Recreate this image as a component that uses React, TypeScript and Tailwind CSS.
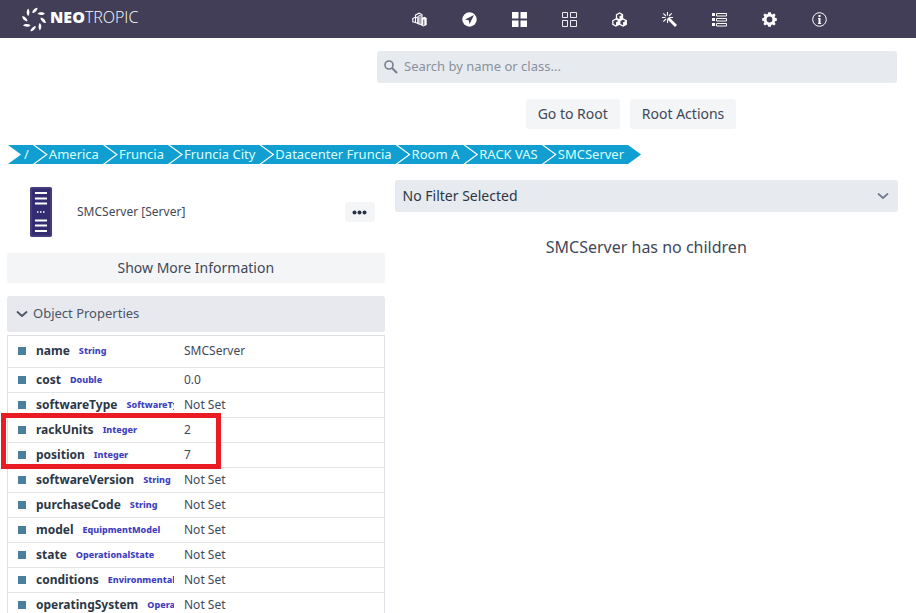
import type { ReactNode } from "react";

const petalAngles = [5, 50, 95, 140, 185, 230, 275, 320];

function LogoMark() {
  return (
    <svg width="24" height="25" viewBox="-12 -12.5 24 25" fill="#fff" aria-hidden="true">
      {petalAngles.map((angle) => (
        <path
          key={angle}
          transform={`rotate(${angle}) translate(0 -9.300) rotate(42)`}
          d="M0 -3.800C1.700 -2 1.900 1.500 .4 3.700C-1.700 2.200 -1.900 -1.500 0 -3.800Z"
        />
      ))}
    </svg>
  );
}

function Icon({ children }: { children: ReactNode }) {
  return (
    <svg width="15" height="15" viewBox="0 0 15 15" fill="none" stroke="#fff" aria-hidden="true">
      {children}
    </svg>
  );
}

const menuItems: { label: string; icon: ReactNode }[] = [
  {
    label: "Navigation",
    icon: (
      <Icon>
        <path d="M.8 6.500 3.500 5 6 6V11.500L3.500 10.500.8 9.800ZM3.500 5V10.500M3.500 5V3L7 1.200 10 2.500V4" strokeWidth="1.100" />
        <path d="M6 4.500 8 3.500 10 4.500V13L6 11.500ZM8 5V12" strokeWidth="1.100" />
        <path d="M9.500 6 12.500 4.800 14.700 6V13L11.500 14.500 9.500 13.500Z" fill="#fff" stroke="none" />
        <path d="M11.800 7.500V13.500" stroke="#423e58" strokeWidth=".9" />
      </Icon>
    ),
  },
  {
    label: "Location",
    icon: (
      <Icon>
        <circle cx="7.500" cy="7.500" r="7.200" fill="#fff" stroke="none" />
        <path d="M12 3 3 7.500 6.700 8.300 7.500 12Z" fill="#423e58" stroke="none" />
      </Icon>
    ),
  },
  {
    label: "Dashboard",
    icon: (
      <Icon>
        <path d="M0 0H6.500V6.500H0ZM8.500 0H15V6.500H8.500ZM0 8.500H6.500V15H0ZM8.500 8.500H15V15H8.500Z" fill="#fff" stroke="none" />
      </Icon>
    ),
  },
  {
    label: "Layout",
    icon: (
      <Icon>
        <path d="M.5 .5H5.500V5.500H.5ZM8.500 .5H14.500V5.500H8.500ZM.5 8.500H5.500V14.500H.5ZM8.500 8.500H14.500V14.500H8.500Z" strokeWidth=".9" />
      </Icon>
    ),
  },
  {
    label: "Packages",
    icon: (
      <Icon>
        <path d="M4.500 2.700 7.500 1 10.500 2.700V6.300L7.500 8 4.500 6.300Z" strokeWidth="1.300" />
        <path d="M7.500 4.200 10.500 2.700V6.300L7.500 8Z" fill="#fff" stroke="none" />
        <path d="M.8 8.700 3.900 7 7.200 8.700V12.300L3.900 14 .8 12.300ZM7.800 8.700 11.100 7 14.300 8.700V12.300L11.100 14 7.800 12.300Z" strokeWidth="1.300" />
        <path d="M4 10.200 7.200 8.700V12.300L4 14ZM11.100 10.200 14.300 8.700V12.300L11.100 14Z" fill="#fff" stroke="none" />
      </Icon>
    ),
  },
  {
    label: "Tools",
    icon: (
      <Icon>
        <path d="M6 6 14 14" strokeWidth="2.800" />
        <path d="M5.500 0V3.500M5.500 7.500V11M0 5.500H3.500M7.500 5.500H11M1.300 1.300 4 4M9.700 1.300 7 4M1.300 9.700 4 7" strokeWidth="1.100" />
      </Icon>
    ),
  },
  {
    label: "Lists",
    icon: (
      <Icon>
        <path d="M0 1H3V4H0ZM0 6H3V9H0ZM0 11H3V14H0Z" fill="#fff" stroke="none" />
        <path d="M4.500 1.500H14.500V4H4.500ZM4.500 6.500H14.500V9H4.500ZM4.500 11.500H14.500V14H4.500Z" />
      </Icon>
    ),
  },
  {
    label: "Settings",
    icon: (
      <Icon>
        <path
          fill="#fff"
          stroke="none"
          fillRule="evenodd"
          d="M6.200.3H8.800L9.300 2 10.400 2.500 12.100 1.500 13.600 3 12.600 4.700 13.100 5.800 14.800 6.300V8.700L13.100 9.200 12.600 10.300 13.600 12 12.100 13.500 10.400 12.500 9.300 13 8.800 14.700H6.200L5.700 13 4.600 12.500 2.900 13.500 1.400 12 2.400 10.300 1.900 9.200 .2 8.700V6.300L1.900 5.800 2.400 4.700 1.400 3 2.900 1.500 4.600 2.500 5.700 2ZM7.500 4.600A2.900 2.900 0 1 0 7.500 10.400A2.900 2.900 0 1 0 7.500 4.600Z"
        />
      </Icon>
    ),
  },
  {
    label: "About",
    icon: (
      <Icon>
        <circle cx="7.500" cy="7.500" r="6.800" />
        <path d="M6.500 3H8.500V5H6.500ZM6 6H8.500V11H9.200V12H6V11H6.500V7H6Z" fill="#fff" stroke="none" />
      </Icon>
    ),
  },
];

const crumbs = ["/", "America", "Fruncia", "Fruncia City", "Datacenter Fruncia", "Room A", "RACK VAS", "SMCServer"];

const properties = [
  { name: "name", type: "String", value: "SMCServer" },
  { name: "cost", type: "Double", value: "0.0" },
  { name: "softwareType", type: "SoftwareType", value: "Not Set" },
  { name: "rackUnits", type: "Integer", value: "2" },
  { name: "position", type: "Integer", value: "7" },
  { name: "softwareVersion", type: "String", value: "Not Set" },
  { name: "purchaseCode", type: "String", value: "Not Set" },
  { name: "model", type: "EquipmentModel", value: "Not Set" },
  { name: "state", type: "OperationalState", value: "Not Set" },
  { name: "conditions", type: "EnvironmentalConditions", value: "Not Set" },
  { name: "operatingSystem", type: "OperatingSystem", value: "Not Set" },
];

function Chevron({ color }: { color: string }) {
  return (
    <svg width="12" height="8" viewBox="0 0 12 8" fill="none" stroke={color} strokeWidth="1.800" aria-hidden="true">
      <path d="M1.500 2 6 6 10.500 2" strokeLinecap="round" strokeLinejoin="round" />
    </svg>
  );
}

function Header() {
  return (
    <header className="flex h-[38px] items-center bg-[#423e58] pl-[22px]">
      <a href="#home" className="flex w-[390px] items-center gap-1 text-white">
        <LogoMark />
        <span className="-mt-1 font-['Open_Sans',sans-serif] text-base leading-5">
          <b className="font-extrabold">NEO</b>
          <span className="font-light">TROPIC</span>
        </span>
      </a>
      <nav className="flex items-center gap-[35px]">
        {menuItems.map((item) => (
          <button key={item.label} type="button" aria-label={item.label}>
            {item.icon}
          </button>
        ))}
      </nav>
    </header>
  );
}

function SearchArea() {
  return (
    <section className="pt-[13px] pr-[19px] pl-[377px]">
      <label className="flex h-8 items-center gap-[6px] rounded-[3px] bg-[#e7eaef] px-[7px]">
        <svg width="14" height="14" viewBox="0 0 14 14" fill="none" stroke="#757e8d" aria-hidden="true">
          <circle cx="5" cy="5" r="4" strokeWidth="1.600" />
          <path d="M8 8 13 13" strokeWidth="2" />
        </svg>
        <input
          type="search"
          aria-label="Search by name or class"
          placeholder="Search by name or class..."
          className="min-w-0 flex-1 bg-transparent text-[13px] text-[#343f50] outline-none placeholder:text-[#8a919d]"
        />
      </label>
      <div className="mt-4 flex justify-center gap-[10px] pr-3">
        <button type="button" className="h-[30px] rounded-[3px] bg-[#f3f5f7] px-3 text-sm">
          Go to Root
        </button>
        <button type="button" className="h-[30px] rounded-[3px] bg-[#f3f5f7] px-3 text-sm">
          Root Actions
        </button>
      </div>
    </section>
  );
}

function Breadcrumbs() {
  return (
    <nav aria-label="Breadcrumb" className="mt-4 pl-2">
      <ol className="flex">
        {crumbs.map((crumb) => (
          <li
            key={crumb}
            className="-mr-[11px] bg-[#109fd0] pr-[17px] pl-[14px] text-[13px] leading-[19px] whitespace-nowrap text-[#dcffff] [clip-path:polygon(0_0,calc(100%-13px)_0,100%_50%,calc(100%-13px)_100%,0_100%,13px_50%)] first:pl-4"
          >
            <a href="#object">{crumb}</a>
          </li>
        ))}
      </ol>
    </nav>
  );
}

function ServerIcon() {
  return (
    <svg width="22" height="50" viewBox="0 0 22 50" aria-hidden="true">
      <rect width="22" height="50" rx="2" fill="#342c70" />
      <rect x="1" y="1" width="20" height="48" rx="1" fill="none" stroke="#5a538c" strokeWidth=".8" />
      <path d="M5 6H17M5 11.500H17M5 16.500H17M5 33.500H17M5 38.500H17M5 44H17" stroke="#fff" strokeWidth="2" />
      <path d="M7 25H8.500M10 25H11.500M13 25H14.500" stroke="#fff" strokeWidth="1.600" />
    </svg>
  );
}

function ObjectPanel() {
  return (
    <section>
      <div className="flex items-center pt-[7px] pr-[10px] pl-[23px]">
        <ServerIcon />
        <h1 className="ml-[25px] flex-1 text-xs">SMCServer [Server]</h1>
        <button type="button" aria-label="More actions" className="flex h-5 w-[30px] items-center justify-center rounded-[3px] bg-[#f3f5f7]">
          <svg width="15" height="5" viewBox="0 0 15 5" fill="#29324a" aria-hidden="true">
            <circle cx="2.500" cy="2.500" r="2" />
            <circle cx="7.500" cy="2.500" r="2" />
            <circle cx="12.500" cy="2.500" r="2" />
          </svg>
        </button>
      </div>
      <button type="button" className="mt-4 h-[30px] w-full rounded-[3px] bg-[#f3f5f7] text-sm">
        Show More Information
      </button>
      <button type="button" aria-expanded="true" className="mt-[13px] flex h-9 w-full items-center gap-[5px] rounded-[3px] bg-[#e7e9ee] px-[9px] text-[13px] text-[#4b5565]">
        <Chevron color="#4b5565" />
        Object Properties
      </button>
      <div className="relative mt-[3px] border border-[#dcdfe3]">
        <table className="w-full table-fixed border-collapse text-xs">
          <tbody>
            {properties.map((property) => (
              <tr key={property.name} className="h-[25px] border-b border-[#e3e5e8] first:h-[31px]">
                <th scope="row" className="w-[176px] p-0 pr-[10px] pl-[10px] text-left">
                  <div className="flex items-center overflow-hidden whitespace-nowrap">
                    <span className="size-2 shrink-0 bg-[#4b809c]" />
                    <span className="ml-[10px] font-bold text-[#2c3746]">{property.name}</span>
                    <span className="ml-[9px] text-[9px] font-extrabold text-[#3f3fbd]">{property.type}</span>
                  </div>
                </th>
                <td className="p-0">{property.value}</td>
              </tr>
            ))}
          </tbody>
        </table>
        <div className="pointer-events-none absolute top-[77px] -left-[7px] h-14 w-[220px] border-5 border-[#e91c24]" />
      </div>
    </section>
  );
}

function ChildrenPanel() {
  return (
    <section>
      <div className="grid items-center">
        <select
          aria-label="Filter"
          className="col-start-1 row-start-1 h-8 w-full appearance-none rounded-[3px] bg-[#e7eaef] px-2 text-sm text-[#2c3746]"
        >
          <option>No Filter Selected</option>
        </select>
        <span className="pointer-events-none col-start-1 row-start-1 mr-[9px] justify-self-end">
          <Chevron color="#757e8d" />
        </span>
      </div>
      <p className="mt-[23px] text-center text-base leading-6">SMCServer has no children</p>
    </section>
  );
}

export default function App() {
  return (
    <div className="h-screen overflow-hidden bg-white font-['Noto_Sans',sans-serif] text-[#3f4859]">
      <Header />
      <SearchArea />
      <Breadcrumbs />
      <main className="mt-4 grid grid-cols-[3fr_4fr] gap-[10px] pr-[18px] pl-[7px]">
        <ObjectPanel />
        <ChildrenPanel />
      </main>
    </div>
  );
}
